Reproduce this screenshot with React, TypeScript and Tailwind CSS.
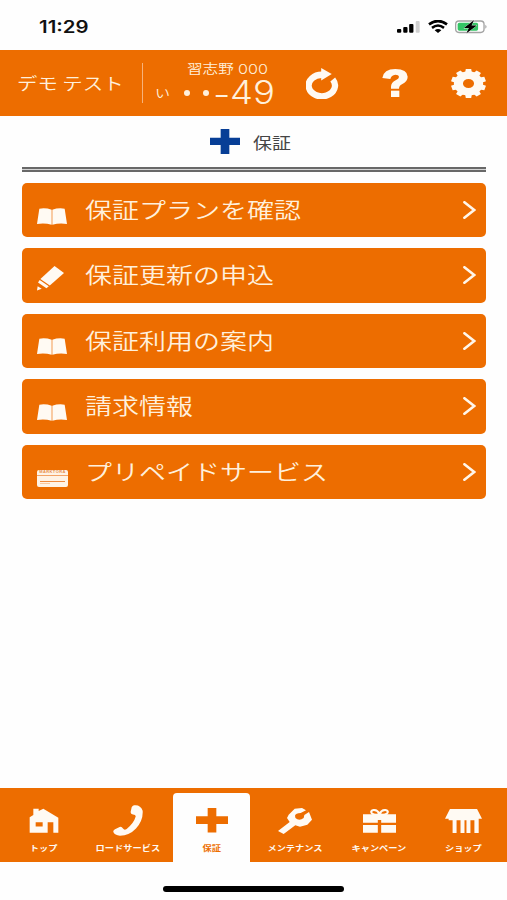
import type { ReactNode } from "react";

const jp = "font-['Noto_Sans_CJK_JP',sans-serif]";

function BookIcon() {
  return (
    <svg viewBox="0 0 90 50" preserveAspectRatio="none" className="h-[17px] w-[30px] fill-[#fffaf3]">
      <path d="M7 2Q26 -1 44 5V49Q22 43 0 47Z" />
      <path d="M83 2Q64 -1 46 5V49Q68 43 90 47Z" />
    </svg>
  );
}

function MarkerIcon() {
  return (
    <svg viewBox="0 0 80 74" preserveAspectRatio="none" className="h-[24.5px] w-[27px] fill-[#fffaf3]">
      <path d="M52 0L80 21L38 59L10 39Z" />
      <path d="M8 42L35 61L28 67L3 50Z" />
      <path d="M2 61L14 69L0 74Z" />
    </svg>
  );
}

function CardIcon() {
  return (
    <div className="flex h-[17px] w-[31px] flex-col overflow-hidden rounded-[2px] bg-[#fff3e5]">
      <div className="flex h-[6px] items-center justify-center border-b border-[#f3a366]">
        <span className="font-['Liberation_Sans',sans-serif] text-[4px] leading-none font-bold tracking-[0.4px] whitespace-nowrap text-[#e8904f]">
          MARKTORA
        </span>
      </div>
      <div className="mx-[3px] mt-[5px] h-px bg-[#ef8b3f]" />
      <div className="mx-[3px] mt-px h-px w-[10px] bg-[#f9c9a0]" />
    </div>
  );
}

const rows: { label: string; icon: ReactNode; pad: string }[] = [
  { label: "保証プランを確認", icon: <BookIcon />, pad: "pt-[24.5px]" },
  { label: "保証更新の申込", icon: <MarkerIcon />, pad: "pt-[18px]" },
  { label: "保証利用の案内", icon: <BookIcon />, pad: "pt-[24.5px]" },
  { label: "請求情報", icon: <BookIcon />, pad: "pt-[24.5px]" },
  { label: "プリペイドサービス", icon: <CardIcon />, pad: "pt-[25px]" },
];

function StatusBar() {
  return (
    <div className="flex h-[50px] items-start justify-between pr-[19px] pl-[39px]">
      <span className="mt-[17px] origin-left scale-x-[1.2] font-['Inter',sans-serif] text-[17px] leading-[20px] font-semibold text-[#111]">
        11:29
      </span>
      <div className="mt-[20px] flex items-center">
        <svg viewBox="0 0 70 36" className="h-[12px] w-[23px]" preserveAspectRatio="none">
          <rect x="0" y="24" width="13" height="11" rx="3" />
          <rect x="19" y="18" width="13" height="17" rx="3" />
          <rect x="37" y="9" width="13" height="26" rx="3" />
          <rect x="57" y="0" width="12" height="35" rx="3" fill="#cfcfcf" />
        </svg>
        <svg viewBox="0 0 60 38" className="ml-[8px] h-[13px] w-[20px]" preserveAspectRatio="none">
          <path d="M3 13Q30 -7 57 13" fill="none" stroke="#000" strokeWidth="8" />
          <path d="M12 23Q30 9 48 23" fill="none" stroke="#000" strokeWidth="7.5" />
          <path d="M20 30Q30 22 40 30L30 38Z" />
        </svg>
        <svg viewBox="0 0 100 40" className="ml-[7px] h-[13.5px] w-[33px]" preserveAspectRatio="none">
          <rect x="2" y="3" width="86" height="34" rx="10" fill="#fff" stroke="#a3a3a3" strokeWidth="4" />
          <rect x="8" y="8" width="62" height="24" rx="5" fill="#34c565" />
          <path d="M92 14Q99 20 92 26Z" fill="#999" />
          <path d="M58 0L27 24H42L34 40L66 16H50Z" stroke="#fff" strokeWidth="2" paintOrder="stroke" />
        </svg>
      </div>
    </div>
  );
}

function Header() {
  return (
    <header className={`flex h-[66px] items-center bg-[#ed6d00] text-[#fff0dc] ${jp}`}>
      <div className="w-[142px] pl-[17px]">
        <span className="inline-block origin-left scale-x-[1.2] text-[17px] leading-[24px] font-[350] whitespace-nowrap">
          デモ テスト
        </span>
      </div>
      <div className="h-[40px] w-px bg-[#f7b27a]" />
      <div className="flex h-full w-[163px] flex-col pt-[11px] pl-[12px]">
        <div className="flex h-[14px] items-center pl-[32px]">
          <span className="origin-left scale-x-[1.2] text-[13px] leading-[14px] font-[350] whitespace-nowrap">
            習志野
          </span>
          <span className="mt-px ml-[12px] origin-left scale-x-[1.2] font-['Inter',sans-serif] text-[13.5px] leading-[14px] font-light">
            000
          </span>
        </div>
        <div className="mt-[5px] flex h-[25px] items-center">
          <span className="mt-px w-[29px] origin-left scale-x-[1.2] text-[12.5px] leading-[20px] font-[350]">い</span>
          <span className="flex w-[25px] items-center gap-[13px]">
            <i className="size-[6px] shrink-0 rounded-full bg-[#fff0dc]" />
            <i className="size-[6px] shrink-0 rounded-full bg-[#fff0dc]" />
          </span>
          <span className="mt-[5px] ml-[3.5px] w-[17px] origin-left scale-x-[1.2] font-['Inter',sans-serif] text-[32px] leading-[18px] font-light">
            -
          </span>
          <span className="origin-left scale-x-[1.14] font-['Inter',sans-serif] text-[32px] leading-[25px] font-light">
            49
          </span>
        </div>
      </div>
      <svg viewBox="0 0 100 92" preserveAspectRatio="none" className="h-[31px] w-[33px]">
        <path d="M81 34A40 32 0 1 1 50 20" fill="none" stroke="#fffaf3" strokeWidth="19" />
        <path d="M46 0L78 18L46 37Z" fill="#fffaf3" />
      </svg>
      <svg viewBox="0 0 78 84" preserveAspectRatio="none" className="ml-[43px] h-[28px] w-[26px]">
        <path
          d="M1 27Q5 0 40 0Q76 0 77 23Q77 37 60 46Q51 50 51 59H27V53Q27 41 41 34Q51 29 51 24Q50 17 40 17Q28 18 25 30Z"
          fill="#fffaf3"
        />
        <path d="M27 65H52V84H27Z" fill="#fffaf3" />
      </svg>
      <svg viewBox="0 0 104 88" preserveAspectRatio="none" className="ml-[43px] h-[29px] w-[35px]">
        <g fill="#fffaf3" transform="translate(52 44) scale(1 .85)">
          <path d="M-10-38L-8-52H8L10-38ZM-10 38L-8 52H8L10 38Z" />
          <path d="M-10-38L-8-52H8L10-38ZM-10 38L-8 52H8L10 38Z" transform="rotate(36)" />
          <path d="M-10-38L-8-52H8L10-38ZM-10 38L-8 52H8L10 38Z" transform="rotate(72)" />
          <path d="M-10-38L-8-52H8L10-38ZM-10 38L-8 52H8L10 38Z" transform="rotate(108)" />
          <path d="M-10-38L-8-52H8L10-38ZM-10 38L-8 52H8L10 38Z" transform="rotate(144)" />
          <circle r="30" fill="none" stroke="#fffaf3" strokeWidth="27" />
        </g>
      </svg>
    </header>
  );
}

const tabs: { label: string; icon: ReactNode; active?: boolean }[] = [
  {
    label: "トップ",
    icon: (
      <svg viewBox="0 0 90 76" preserveAspectRatio="none" className="h-[25px] w-[30px] fill-current">
        <path
          fillRule="evenodd"
          d="M13 2H29V9L43 2L88 30V75H73V43H56V75H2V28L13 21ZM20 43V56H41V43Z"
        />
      </svg>
    ),
  },
  {
    label: "ロードサービス",
    icon: (
      <svg viewBox="0 0 90 92" preserveAspectRatio="none" className="-mt-px h-[31px] w-[30px] fill-current">
        <path d="M63 1Q82 -2 89 17Q91 46 69 70Q49 91 21 91Q5 90 1 80Q0 75 6 72L20 65Q26 63 30 70Q34 76 41 71Q63 53 68 34Q69 29 60 28Q52 27 53 20L56 7Q58 2 63 1Z" />
      </svg>
    ),
  },
  {
    label: "保証",
    active: true,
    icon: (
      <svg viewBox="0 0 96 74" preserveAspectRatio="none" className="h-[24.5px] w-[32px] fill-current">
        <path d="M35 0H61V25H96V48H61V74H35V48H0V25H35Z" />
      </svg>
    ),
  },
  {
    label: "メンテナンス",
    icon: (
      <svg viewBox="0 0 102 78" preserveAspectRatio="none" className="h-[26px] w-[34px] fill-current">
        <path d="M50 2L72 0L84 7L68 15Q53 15 51 23Q50 30 58 34Q68 37 77 30L79 21L93 12L102 35L88 50L66 56L52 52L17 78L0 69L35 42L27 30L32 20Z" />
      </svg>
    ),
  },
  {
    label: "キャンペーン",
    icon: (
      <svg viewBox="0 0 98 72" preserveAspectRatio="none" className="h-[24px] w-[33px]">
        <path d="M0 16H98V41H54V33H44V41H0ZM0 48H44V71H0ZM54 48H98V71H54Z" fill="currentColor" />
        <path
          d="M49 16Q35 19 27 14Q20 6 31 3Q42 2 49 14Q56 2 67 3Q78 6 71 14Q63 19 49 16"
          fill="#ed6d00"
          stroke="currentColor"
          strokeWidth="6"
        />
      </svg>
    ),
  },
  {
    label: "ショップ",
    icon: (
      <svg viewBox="0 0 112 72" preserveAspectRatio="none" className="h-[24px] w-[37px] fill-current">
        <path d="M15 0H97L112 29H102V72H89V34H77V72H65V34H59V72H47V34H35V72H23V34H11V29H0Z" />
      </svg>
    ),
  },
];

export default function App() {
  return (
    <div className="flex h-[900px] w-[507px] flex-col overflow-hidden bg-[#fefefe]">
      <StatusBar />
      <Header />
      <main className="flex flex-1 flex-col pr-[21px] pl-[22px]">
        <div className="flex h-[51px] items-center pl-[188px]">
          <svg viewBox="0 0 90 74" preserveAspectRatio="none" className="h-[25px] w-[30px] fill-[#073e96]">
            <path d="M32 0H58V26H90V47H58V74H32V47H0V26H32Z" />
          </svg>
          <span className={`ml-[13px] origin-left scale-x-[1.22] text-[15.5px] leading-[24px] text-[#444] ${jp}`}>
            保証
          </span>
        </div>
        <div className="h-[5px] border-y-2 border-[#686868] bg-[#d5d5d5]" />
        <div className="mt-[11px] flex flex-col gap-[11px]">
          {rows.map((row) => (
            <button
              key={row.label}
              className="flex h-[54.4px] items-start rounded-[5px] bg-[#ed6d00] text-left text-[#fff0dc]"
            >
              <span className={`flex w-[62.5px] pl-[15px] ${row.pad}`}>{row.icon}</span>
              <span
                className={`mt-[9px] origin-left scale-x-[1.227] text-[22px] leading-[32px] font-[350] whitespace-nowrap ${jp}`}
              >
                {row.label}
              </span>
              <svg viewBox="0 0 13 18" className="mt-[18px] mr-[10px] ml-auto h-[18px] w-[13px]">
                <path
                  d="M1.4 1.2L11.2 9L1.4 16.8"
                  fill="none"
                  stroke="#fff6ea"
                  strokeWidth="2.6"
                  strokeLinecap="round"
                />
              </svg>
            </button>
          ))}
        </div>
      </main>
      <nav className={`grid h-[74px] shrink-0 grid-cols-6 bg-[#ed6d00] px-[2px] pt-[5px] ${jp}`}>
        {tabs.map((tab) => (
          <div
            key={tab.label}
            className={`mx-[3.5px] flex flex-col items-center ${
              tab.active ? "rounded-t-[4px] bg-[#fefefe] text-[#ed6d00]" : "text-[#fffaf3]"
            }`}
          >
            <div className="flex h-[48px] items-center justify-center pt-[7px]">{tab.icon}</div>
            <span className="scale-x-[1.2] text-[7.7px] leading-[14px] font-bold whitespace-nowrap">{tab.label}</span>
          </div>
        ))}
      </nav>
      <div className="flex h-[38px] shrink-0 justify-center pt-[24px]">
        <div className="h-[6px] w-[181px] rounded-full bg-black" />
      </div>
    </div>
  );
}
